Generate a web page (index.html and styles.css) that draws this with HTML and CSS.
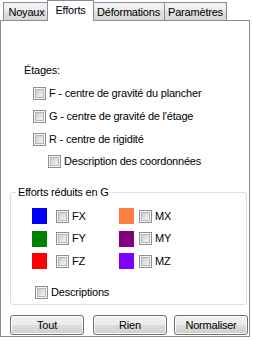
FILE: index.html
```html
<!DOCTYPE html>
<html>
    <head>
        <title>Efforts</title>
        <meta name="viewport" content="width=device-width, initial-scale=1">
        <link rel="stylesheet" href="styles.css">
    </head>
    <body>
        <div class="tabs">
            <div class="tab tab-noyaux">Noyaux</div>
            <div class="tab tab-efforts active">Efforts</div>
            <div class="tab tab-deformations">Déformations</div>
            <div class="tab tab-parametres">Paramètres</div>
        </div>

        <div class="panel">
            <div class="caption">Étages:</div>
            <label class="check level"><span class="box"></span>F - centre de gravité du plancher</label>
            <label class="check level"><span class="box"></span>G - centre de gravité de l'étage</label>
            <label class="check level"><span class="box"></span>R - centre de rigidité</label>
            <label class="check level sub"><span class="box"></span>Description des coordonnées</label>

            <fieldset class="group">
                <legend>Efforts réduits en G</legend>
                <div class="swatches">
                    <span class="swatch fx"></span>
                    <label class="check"><span class="box"></span>FX</label>
                    <span class="swatch mx"></span>
                    <label class="check"><span class="box"></span>MX</label>

                    <span class="swatch fy"></span>
                    <label class="check"><span class="box"></span>FY</label>
                    <span class="swatch my"></span>
                    <label class="check"><span class="box"></span>MY</label>

                    <span class="swatch fz"></span>
                    <label class="check"><span class="box"></span>FZ</label>
                    <span class="swatch mz"></span>
                    <label class="check"><span class="box"></span>MZ</label>
                </div>
                <label class="check descriptions"><span class="box"></span>Descriptions</label>
            </fieldset>

            <div class="buttons">
                <button class="btn">Tout</button>
                <button class="btn">Rien</button>
                <button class="btn">Normaliser</button>
            </div>
        </div>
    </body>
</html>
```

FILE: styles.css
```css
body, html {
    margin: 0;
    background-color: white;
    color: black;
    font-family: "Liberation Sans", Arial, sans-serif;
    font-size: 11px;
    letter-spacing: -0.2px;
    line-height: 13px;
}

/* tab strip */
.tabs {
    display: flex;
    align-items: flex-end;
    height: 20px;
    padding-left: 3px;
}

.tab {
    box-sizing: border-box;
    height: 18px;
    padding-top: 3px;
    text-align: center;
    border: 1px solid #898c95;
    border-bottom: none;
    background: linear-gradient(#f3f3f3 0%, #ebebeb 50%, #dfdfdf 50%, #d8d8d8 100%);
    margin-right: -1px;
}

.tab.active {
    position: relative;
    z-index: 1;
    height: 21px;
    margin: 0 -2px -1px -2px;
    padding-top: 3px;
    background: white;
}

.tab-noyaux { width: 47px; }
.tab-efforts { width: 47px; }
.tab-deformations { width: 73px; }
.tab-parametres { width: 63px; }

/* page */
.panel {
    box-sizing: border-box;
    width: 250px;
    height: 317px;
    border: 1px solid #898c95;
    padding-top: 43px;
    display: flex;
    flex-direction: column;
}

.caption {
    margin-left: 23px;
}

.check {
    display: flex;
    align-items: center;
    gap: 3px;
    height: 13px;
    white-space: nowrap;
}

.level {
    margin-top: 10px;
    margin-left: 32px;
}

.level.sub {
    margin-top: 9px;
    margin-left: 47px;
}

.box {
    box-sizing: border-box;
    flex: none;
    display: flex;
    width: 13px;
    height: 13px;
    padding: 1px;
    border: 1px solid #8f8f8f;
    background-color: #f4f4f4;
}

.box::after {
    content: "";
    flex: 1;
    border: 1px solid #b4b8be;
    background: linear-gradient(135deg, #c9cdd2, #f4f4f4);
}

/* group box */
.group {
    margin: 18px 2px 0 9px;
    padding: 0 0 5px 0;
    border: 1px solid #d5dfe5;
    border-radius: 3px;
}

.group legend {
    margin-left: 5px;
    padding: 0 2px;
}

.swatches {
    display: grid;
    grid-template-columns: 24px 63px 20px auto;
    grid-auto-rows: 16px;
    row-gap: 6.5px;
    align-items: center;
    margin: 9px 0 0 21px;
}

.swatch {
    width: 15px;
    height: 16px;
}

.fx { background-color: #0000ff; }
.fy { background-color: #008000; }
.fz { background-color: #ff0000; }
.mx { background-color: #ff8040; }
.my { background-color: #800080; }
.mz { background-color: #8000ff; }

.descriptions {
    margin: 17px 0 0 24px;
}

/* bottom buttons */
.buttons {
    display: flex;
    gap: 9px;
    margin: 10px 0 0 9px;
}

.btn {
    box-sizing: border-box;
    width: 74px;
    height: 20px;
    padding: 0;
    font: inherit;
    letter-spacing: inherit;
    color: black;
    border: 1px solid #707070;
    border-radius: 3px;
    background: linear-gradient(#f2f2f2 0%, #ebebeb 50%, #dddddd 50%, #cfcfcf 100%);
    box-shadow: inset 0 0 0 1px #fbfbfb;
}

.buttons .btn + .btn + .btn {
    margin-left: -2px;
}
```
